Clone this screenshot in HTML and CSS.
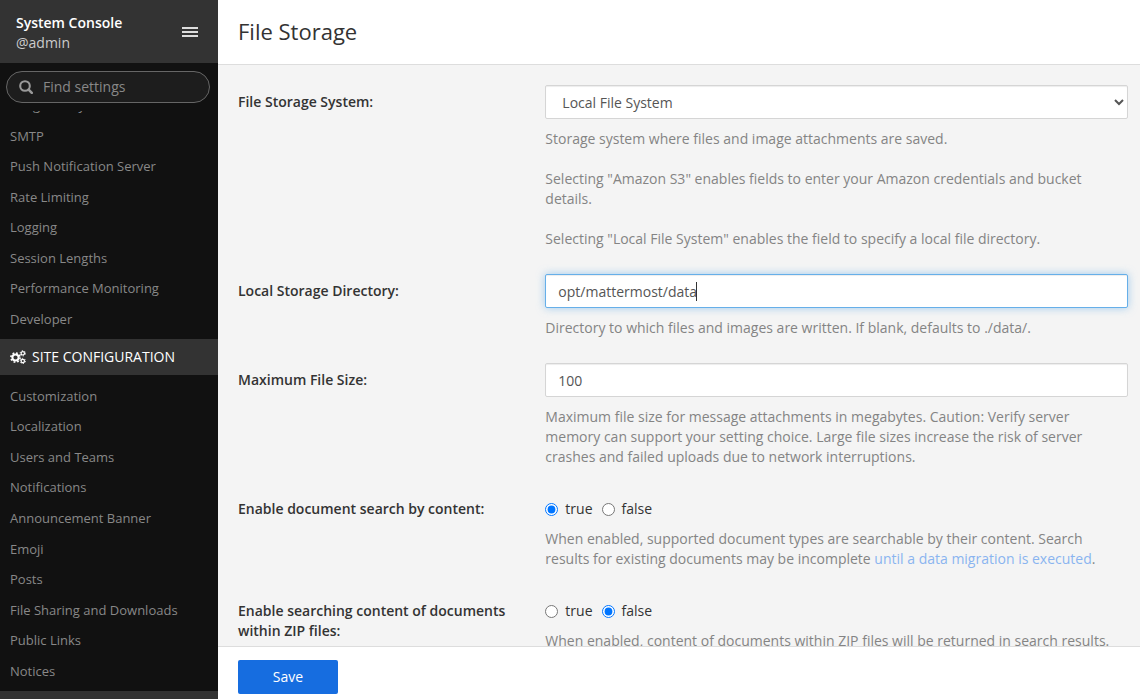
FILE: index.html
```html
<!DOCTYPE html>
<html lang="en">
<head>
<meta charset="utf-8">
<meta name="viewport" content="width=device-width, initial-scale=1">
<title>File Storage - System Console</title>
<link rel="stylesheet" href="styles.css">
</head>
<body>
<div class="console">
  <aside class="sidebar">
    <header class="sidebar-header">
      <div class="team">
        <div class="team-name">System Console</div>
        <div class="team-user">@admin</div>
      </div>
      <button class="menu-button" type="button" aria-label="Menu">
        <svg width="16" height="10" viewBox="0 0 16 10" fill="currentColor" shape-rendering="crispEdges"><path d="M0 0h16v2H0zM0 4h16v2H0zM0 8h16v2H0z"/></svg>
      </button>
    </header>
    <label class="search">
      <svg class="search-icon" width="14" height="14" viewBox="0 0 14 14" fill="none" stroke="currentColor"><circle cx="6" cy="6" r="4.8" stroke-width="2.1"/><path d="M9.6 9.6l3.2 3.2" stroke-width="2.6" stroke-linecap="round"/></svg>
      <input class="search-input" type="text" placeholder="Find settings" aria-label="Find settings">
    </label>
    <nav class="nav">
      <ul class="nav-list nav-list-scrolled">
        <li><a class="nav-link" href="#">Image Proxy</a></li>
        <li><a class="nav-link" href="#">SMTP</a></li>
        <li><a class="nav-link" href="#">Push Notification Server</a></li>
        <li><a class="nav-link" href="#">Rate Limiting</a></li>
        <li><a class="nav-link" href="#">Logging</a></li>
        <li><a class="nav-link" href="#">Session Lengths</a></li>
        <li><a class="nav-link" href="#">Performance Monitoring</a></li>
        <li><a class="nav-link" href="#">Developer</a></li>
      </ul>
      <h2 class="nav-heading">
        <svg width="16" height="14" viewBox="0 0 16 14" fill="none" stroke="currentColor">
          <circle cx="5.5" cy="7.5" r="3.1" stroke-width="2"/>
          <circle cx="5.5" cy="7.5" r="4.6" stroke-width="1.6" stroke-dasharray="1.81 1.8"/>
          <circle cx="12.8" cy="3.3" r="1.7" stroke-width="1.2"/>
          <circle cx="12.8" cy="3.3" r="2.6" stroke-width="1" stroke-dasharray="1.36 1.36"/>
          <circle cx="12.8" cy="11" r="1.7" stroke-width="1.2"/>
          <circle cx="12.8" cy="11" r="2.6" stroke-width="1" stroke-dasharray="1.36 1.36"/>
        </svg>
        <span>SITE CONFIGURATION</span>
      </h2>
      <ul class="nav-list">
        <li><a class="nav-link" href="#">Customization</a></li>
        <li><a class="nav-link" href="#">Localization</a></li>
        <li><a class="nav-link" href="#">Users and Teams</a></li>
        <li><a class="nav-link" href="#">Notifications</a></li>
        <li><a class="nav-link" href="#">Announcement Banner</a></li>
        <li><a class="nav-link" href="#">Emoji</a></li>
        <li><a class="nav-link" href="#">Posts</a></li>
        <li><a class="nav-link" href="#">File Sharing and Downloads</a></li>
        <li><a class="nav-link" href="#">Public Links</a></li>
        <li><a class="nav-link" href="#">Notices</a></li>
      </ul>
      <div class="nav-heading"></div>
    </nav>
  </aside>

  <main class="main">
    <header class="page-header"><h1 class="page-title">File Storage</h1></header>
    <form class="settings" id="settings">
      <div class="setting">
        <label class="setting-label" for="driver">File Storage System:</label>
        <div class="setting-body">
          <select class="control control-select" id="driver"><option>Local File System</option><option>Amazon S3</option></select>
          <div class="help">
            <p>Storage system where files and image attachments are saved.</p>
            <p>Selecting "Amazon S3" enables fields to enter your Amazon credentials and bucket details.</p>
            <p>Selecting "Local File System" enables the field to specify a local file directory.</p>
          </div>
        </div>
      </div>
      <div class="setting">
        <label class="setting-label" for="directory">Local Storage Directory:</label>
        <div class="setting-body">
          <div class="control-wrap">
            <input class="control control-active" id="directory" type="text" value="opt/mattermost/data">
            <span class="caret"></span>
          </div>
          <div class="help"><p>Directory to which files and images are written. If blank, defaults to ./data/.</p></div>
        </div>
      </div>
      <div class="setting">
        <label class="setting-label" for="max-size">Maximum File Size:</label>
        <div class="setting-body">
          <input class="control" id="max-size" type="text" value="100">
          <div class="help"><p>Maximum file size for message attachments in megabytes. Caution: Verify server memory can support your setting choice. Large file sizes increase the risk of server crashes and failed uploads due to network interruptions.</p></div>
        </div>
      </div>
      <div class="setting" role="radiogroup" aria-labelledby="extract-label">
        <div class="setting-label" id="extract-label">Enable document search by content:</div>
        <div class="setting-body">
          <div class="radios">
            <label class="radio"><input type="radio" name="extract" checked>true</label>
            <label class="radio"><input type="radio" name="extract">false</label>
          </div>
          <div class="help"><p>When enabled, supported document types are searchable by their content. Search results for existing documents may be incomplete <a class="help-link" href="#">until a data migration is executed</a>.</p></div>
        </div>
      </div>
      <div class="setting" role="radiogroup" aria-labelledby="zip-label">
        <div class="setting-label" id="zip-label">Enable searching content of documents within ZIP files:</div>
        <div class="setting-body">
          <div class="radios">
            <label class="radio"><input type="radio" name="zip">true</label>
            <label class="radio"><input type="radio" name="zip" checked>false</label>
          </div>
          <div class="help"><p>When enabled, content of documents within ZIP files will be returned in search results.</p></div>
        </div>
      </div>
    </form>
    <footer class="save-bar"><button class="save-button" type="submit" form="settings">Save</button></footer>
  </main>
</div>
</body>
</html>
```
FILE: styles.css
```css
* { box-sizing: border-box; }

body {
  margin: 0;
  font-family: "Open Sans", sans-serif;
  font-size: 14px;
  line-height: 20px;
  color: #333;
}

ul, h1, h2, p { margin: 0; padding: 0; }
ul { list-style: none; }
button, input, select { font: inherit; color: inherit; }

.console { display: flex; height: 100vh; overflow: hidden; }

/* Sidebar */
.sidebar {
  flex: 0 0 218px;
  min-width: 0;
  display: flex;
  flex-direction: column;
  background: #111;
}
.sidebar-header {
  display: flex;
  align-items: center;
  justify-content: space-between;
  padding: 13px 20px 10px 16px;
  background: #333;
}
.team-name { font-weight: 600; color: #fff; }
.team-user { color: #ccc; }
.menu-button {
  display: flex;
  margin-bottom: 2px;
  padding: 0;
  border: 0;
  background: none;
  color: #ddd;
}
.search {
  display: flex;
  align-items: center;
  gap: 10px;
  height: 32px;
  margin: 8px 8px 8px 6px;
  padding: 0 12px;
  border: 1px solid #666;
  border-radius: 16px;
  background: #1d1d1d;
  color: #999;
}
.search-icon { flex: none; }
.search-input {
  flex: 1;
  width: 100%;
  min-width: 0;
  padding: 0;
  border: 0;
  outline: 0;
  background: none;
}
.search-input::placeholder { color: #888; opacity: 1; }
.nav { flex: 1; min-height: 0; overflow: hidden; }
.nav-list { padding: 6px 0 5px; }
.nav-list-scrolled { margin-top: -27px; padding-bottom: 4px; }
.nav-link {
  display: block;
  padding: 6px 10px;
  font-size: 13px;
  line-height: 1.43;
  color: #888;
  text-decoration: none;
}
.nav-heading {
  display: flex;
  align-items: center;
  gap: 6px;
  height: 36px;
  padding: 0 10px;
  background: #333;
  color: #fff;
  font-size: 14px;
  font-weight: 400;
}

/* Main column */
.main {
  flex: 1;
  min-width: 0;
  display: flex;
  flex-direction: column;
  background: #f4f4f4;
}
.page-header {
  padding: 19px 20px 21px;
  border-bottom: 1px solid #ddd;
  background: #fff;
}
.page-title { font-size: 22px; line-height: 24px; font-weight: 400; }
.settings {
  flex: 1;
  min-height: 0;
  overflow: hidden;
  display: flex;
  flex-direction: column;
  gap: 25px;
  padding: 20px 12px 0 20px;
}
.setting {
  flex: none;
  display: grid;
  grid-template-columns: 1fr 2fr;
  gap: 16px;
}
.setting-label { padding-top: 7px; font-weight: 600; }
.control-wrap { position: relative; }
.control {
  display: block;
  width: 100%;
  height: 34px;
  padding: 6px 12px;
  border: 1px solid #d5d5d5;
  border-radius: 2px;
  outline: 0;
  background: #fff;
  color: #555;
  box-shadow: inset 0 1px 1px rgba(0, 0, 0, 0.075);
}
.control-select { padding-right: 0; }
.control-active { caret-color: transparent; }
.control-active,
.control:focus {
  border-color: #66afe9;
  box-shadow: inset 0 1px 1px rgba(0, 0, 0, 0.075), 0 0 8px rgba(102, 175, 233, 0.6);
}
.caret {
  position: absolute;
  top: 8px;
  left: 151px;
  width: 1px;
  height: 19px;
  background: #333;
}
.help {
  display: flex;
  flex-direction: column;
  gap: 20px;
  margin-top: 10px;
  padding-right: 4px;
  color: #848484;
}
.help-link { color: #8ab4f0; text-decoration: none; }
.radios { display: flex; gap: 9px; padding-top: 7px; }
.radio { display: flex; align-items: center; gap: 7px; }
.radio input { width: 13px; height: 13px; margin: 0; }

.save-bar {
  padding: 13px 20px 5px;
  border-top: 1px solid #ddd;
  background: #fff;
}
.save-button {
  width: 100px;
  height: 34px;
  padding: 0;
  border: 0;
  border-radius: 2px;
  background: #166de0;
  color: #fff;
}
```
